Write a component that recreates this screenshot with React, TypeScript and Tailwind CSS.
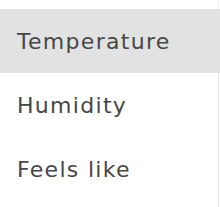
import React from 'react';

const items = ['Temperature', 'Humidity', 'Feels like'];

export default function App() {
  return (
    <div className="w-[220px] h-[207px] bg-white flex flex-col" style={{ fontFamily: '"DejaVu Sans", sans-serif' }}>
      <div className="h-[9px] w-[219px] border-r border-[#ececec]" />
      {items.map((label, i) => (
        <div
          key={label}
          className={
            i === 0
              ? 'h-[64px] w-[220px] bg-[#e2e2e2] flex items-center pl-[17px] pt-[1px] text-[22px] tracking-[1.3px] text-[#474747]'
              : 'h-[64px] w-[219px] border-r border-[#e6e6e6] flex items-center pl-[17px] pt-[1px] text-[22px] tracking-[1.3px] text-[#474747]'
          }
        >
          {label}
        </div>
      ))}
      <div className="flex-1 w-[219px] border-r border-[#e6e6e6]" />
    </div>
  );
}
